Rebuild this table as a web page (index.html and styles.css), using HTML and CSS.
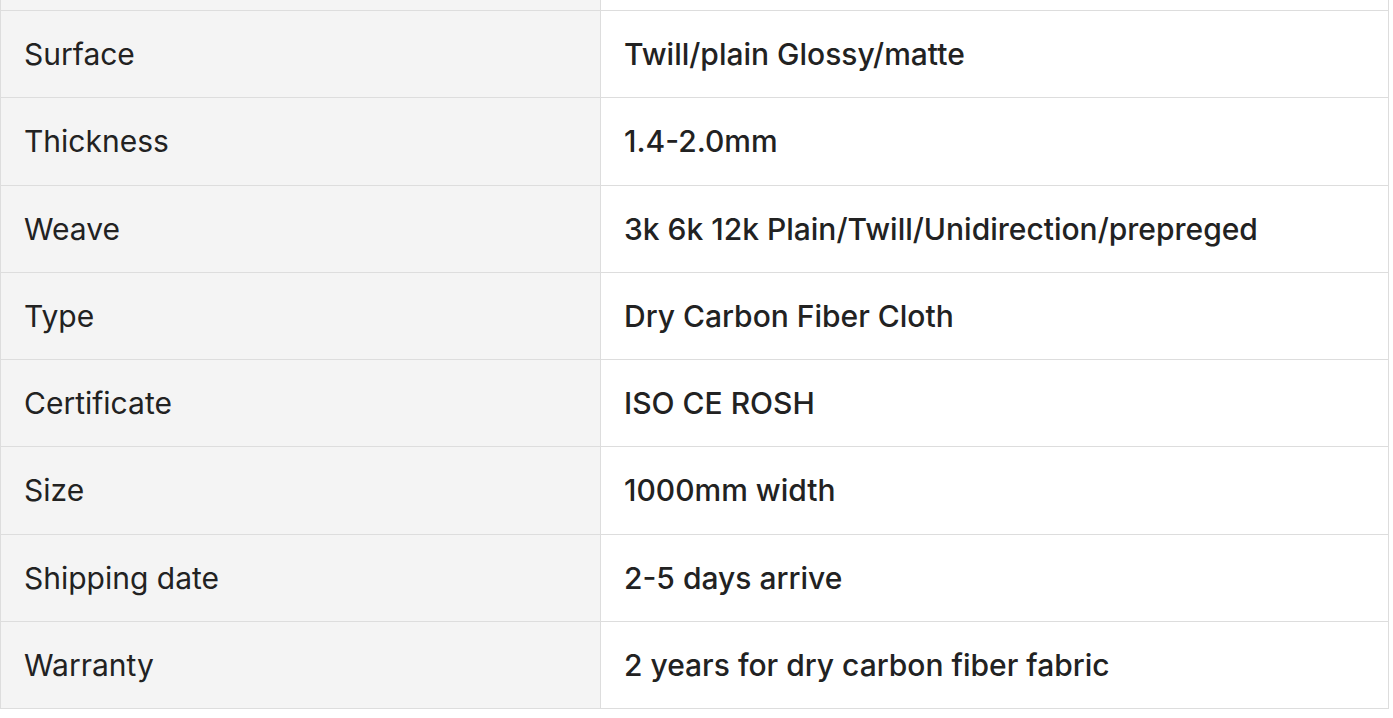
FILE: index.html
```html
<!DOCTYPE html>
<html lang="en">
<head>
<meta charset="utf-8">
<title>Specifications</title>
<link rel="stylesheet" href="styles.css">
</head>
<body>
<table class="spec">
  <tbody>
    <tr class="cut"><td class="k"></td><td class="v"></td></tr>
    <tr><td class="k">Surface</td><td class="v">Twill/plain Glossy/matte</td></tr>
    <tr><td class="k">Thickness</td><td class="v">1.4-2.0mm</td></tr>
    <tr><td class="k">Weave</td><td class="v">3k 6k 12k Plain/Twill/Unidirection/prepreged</td></tr>
    <tr><td class="k">Type</td><td class="v">Dry Carbon Fiber Cloth</td></tr>
    <tr><td class="k">Certificate</td><td class="v">ISO CE ROSH</td></tr>
    <tr><td class="k">Size</td><td class="v">1000mm width</td></tr>
    <tr><td class="k">Shipping date</td><td class="v">2-5 days arrive</td></tr>
    <tr><td class="k">Warranty</td><td class="v">2 years for dry carbon fiber fabric</td></tr>
  </tbody>
</table>
</body>
</html>
```
FILE: styles.css
```css
html, body {
  margin: 0;
  padding: 0;
  background: #ffffff;
}
.spec {
  border-collapse: collapse;
  width: 1389px;
  table-layout: fixed;
  font-family: Inter, "Noto Sans", sans-serif;
  font-size: 30px;
  line-height: 42px;
  color: #222222;
}
.spec td {
  border: 1px solid #dddddd;
  padding: 22.125px 23px;
  vertical-align: middle;
  text-align: left;
}
.spec .k {
  width: 599px;
  background: #f4f4f4;
  font-weight: 400;
}
.spec .v {
  background: #ffffff;
  font-weight: 500;
}
.spec tr.cut td {
  padding: 0;
  height: 10px;
  line-height: 10px;
  border-top: none;
}
```
